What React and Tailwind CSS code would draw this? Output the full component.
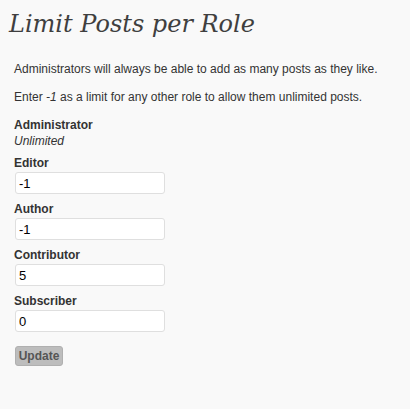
const roles = [
  { name: 'Editor', value: '-1' },
  { name: 'Author', value: '-1' },
  { name: 'Contributor', value: '5' },
  { name: 'Subscriber', value: '0' },
];

export default function App() {
  return (
    <div className="w-[410px] h-[409px] bg-[#f9f9f9] text-[#333] text-[12px] font-['Liberation_Sans',Arial,sans-serif]">
      <div className="pl-[14px] pt-[9px]">
        <h2 className="-ml-[5px] h-[36px] text-[24px] leading-[30px] italic text-[#3f3f3f] font-['DejaVu_Serif',Georgia,serif]">
          Limit Posts per Role
        </h2>
        <p className="mt-[15px] leading-[18px]">Administrators will always be able to add as many posts as they like.</p>
        <p className="mt-[10px] leading-[18px]">
          Enter <em>-1</em> as a limit for any other role to allow them unlimited posts.
        </p>

        <div className="mt-[11px]">
          <div className="font-bold leading-[16px]">Administrator</div>
          <div className="italic leading-[16px]">Unlimited</div>
        </div>

        <div className="mt-[6px] flex flex-col">
          {roles.map((r) => (
            <div key={r.name} className="mb-[7px]">
              <label className="block font-bold leading-[16px]">{r.name}</label>
              <input
                type="text"
                defaultValue={r.value}
                className="mt-px ml-px block w-[150px] h-[22px] px-[3px] bg-white border border-[#dfdfdf] rounded-[3px] text-[13px] text-black outline-none"
              />
            </div>
          ))}
        </div>

        <button className="mt-[7px] ml-px h-[20px] w-[48px] rounded-[3px] bg-[#bdbdbd] border border-[#b0b0b0] text-[12px] font-bold text-[#555] leading-none">
          Update
        </button>
      </div>
    </div>
  );
}
